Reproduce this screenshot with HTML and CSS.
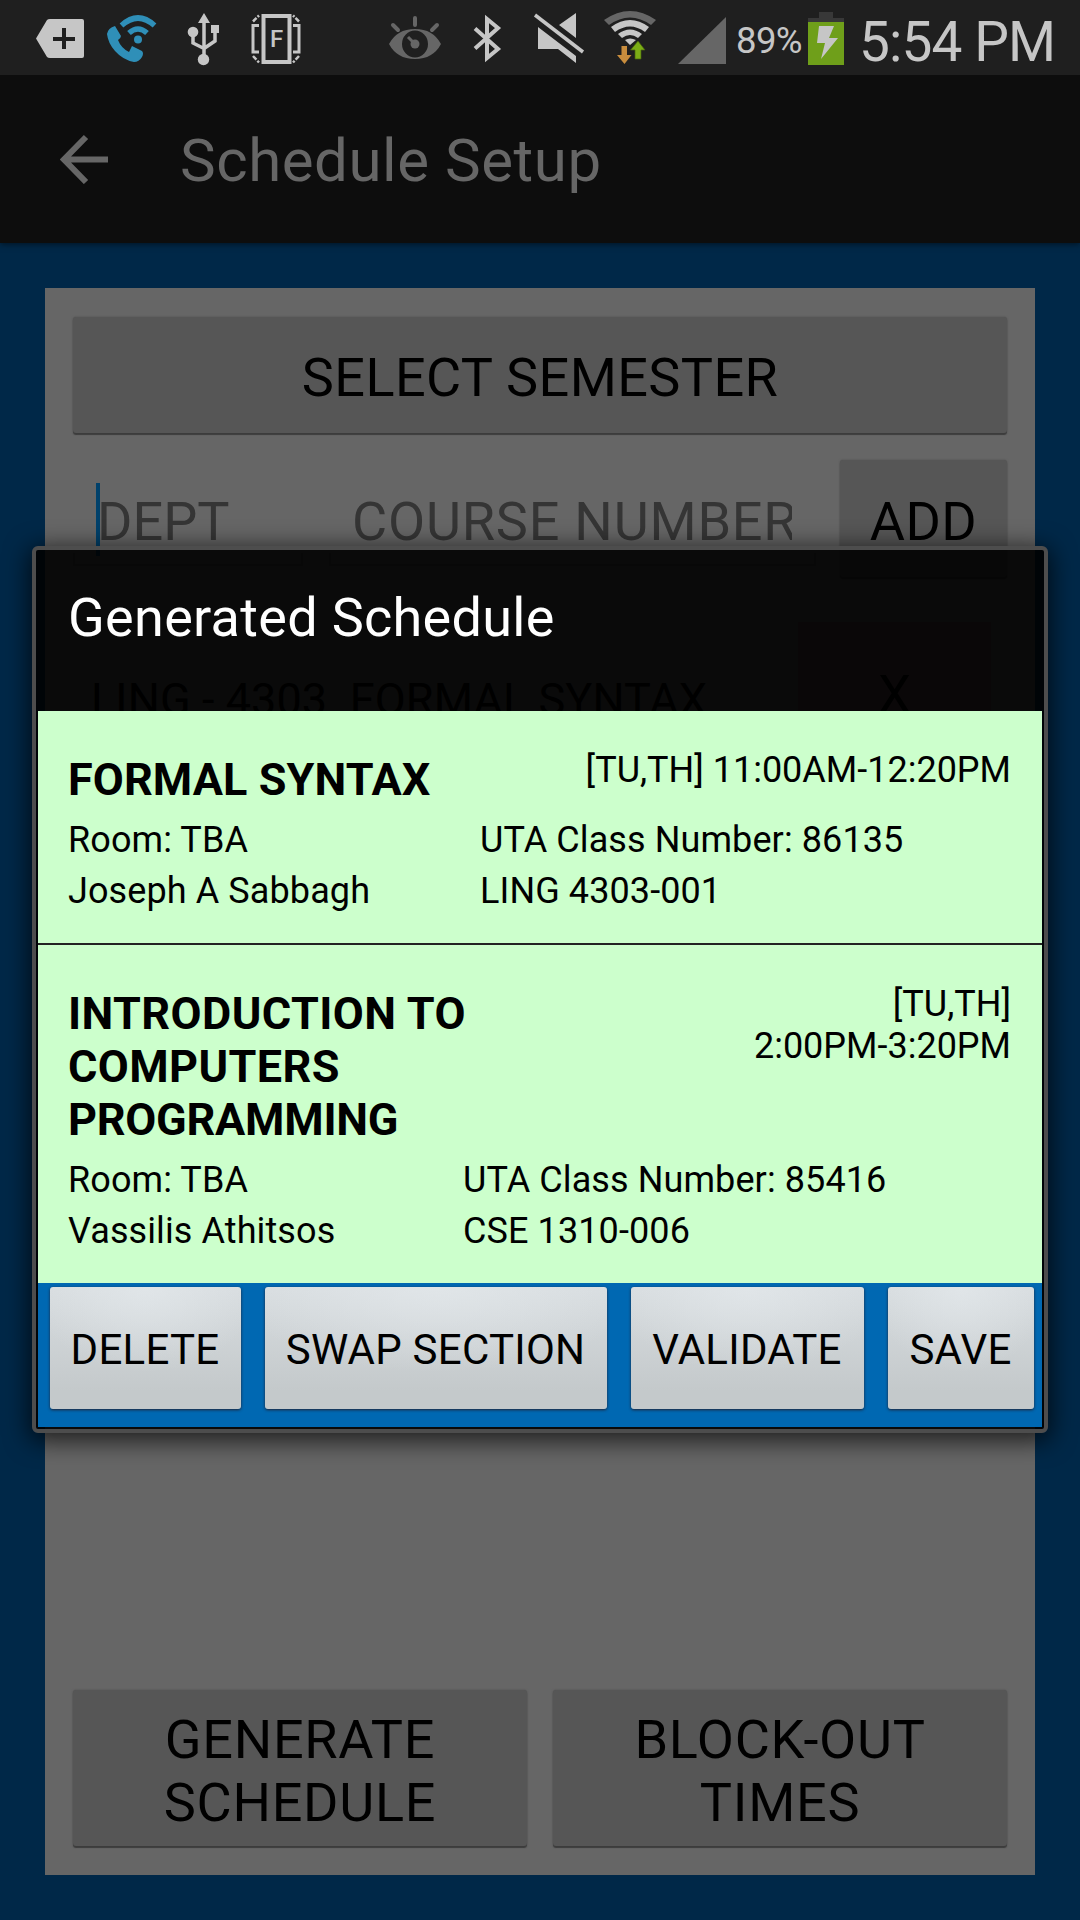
FILE: index.html
```html
<!DOCTYPE html>
<html lang="en">
<head>
<meta charset="utf-8">
<title>Schedule Setup</title>
<link rel="stylesheet" href="styles.css">
</head>
<body>
<div class="screen">
  <header class="status">
    <svg class="status-icons" width="780" height="75" viewBox="0 0 780 75">
      <path fill="#c6c6c6" fill-rule="evenodd" d="M36 38.500L47 20Q48 19 50 19H82Q84 19 84 21V56Q84 58 82 58H50Q48 58 47 57ZM62 28V37H53V41H62V49H66V41H75V37H66V28Z"/>
      <g fill="none" stroke="#2f8fb8" stroke-width="5.500">
        <path d="M121.500 25.500Q138 10.500 154.500 25.500"/>
        <path d="M129 33Q138 25 147 33"/>
      </g>
      <circle cx="138" cy="39.500" r="4" fill="#2f8fb8"/>
      <path fill="#2f8fb8" d="M107 34Q108 28 115 26L121 36Q121 38 118 40Q121 48 129 52L132 46L142 51Q144 53 142 57Q139 62 134 62Q123 60 115 51Q108 43 107 34Z"/>
      <g fill="none" stroke="#c6c6c6" stroke-width="3.500">
        <path d="M204 20V58M193 33V43L204 48.500M215 30V41L204 48.500"/>
      </g>
      <path fill="#c6c6c6" d="M204 13L210 23H198ZM211 25H219V33H211Z"/>
      <circle cx="193" cy="32" r="5.300" fill="#c6c6c6"/><circle cx="203.500" cy="59.500" r="5.700" fill="#c6c6c6"/>
      <g fill="none" stroke="#c6c6c6">
        <rect x="263.500" y="16" width="26" height="46" stroke-width="4"/>
        <path stroke-width="3" d="M259 25.500H253V52H259M293 25.500H299V52H293"/>
        <path stroke-width="2.500" stroke-dasharray="5 1.500" d="M253 21.500L259 15.500M299 21.500L293 15.500M253 56L259 62.500M299 56L293 62.500"/>
      </g>
      <g fill="none" stroke="#666" stroke-width="4" stroke-linecap="round">
        <path d="M415 18V25M393 25L398 30M437 25L432 30"/>
      </g>
      <path fill="#666" fill-rule="evenodd" d="M389 44Q397 29 415 29Q433 29 441 44Q433 59 415 59Q397 59 389 44ZM402 44A13 13.500 0 0 0 428 44A13 13.500 0 0 0 402 44Z"/>
      <circle cx="415" cy="44" r="4.500" fill="#666"/>
      <path d="M408 37L413 42" stroke="#666" stroke-width="3"/>
      <path fill="none" stroke="#c6c6c6" stroke-width="4" d="M475 28.500L498 49L487 58V19L498 28L475 48.500"/>
      <g fill="#c6c6c6">
        <path d="M576 13V38L559 25ZM538 27L576 56V63L558 49H538Z"/>
      </g>
      <path d="M535 15L583 52" stroke="#c6c6c6" stroke-width="3.500"/>
      <path fill="#666" d="M604 20Q630 2 656 20L651 25Q630 10 609 25Z"/>
      <path fill="#c6c6c6" d="M611 27Q630 13 649 27L645 32Q630 21 615 32ZM618 34Q630 25 642 34L638 38Q630 32 622 38ZM625 40Q630 37 636 40L630 45Z"/>
      <path fill="#c98d3d" d="M621.500 46H627V55H631.500L624.500 64L617 55H621.500Z"/>
      <path fill="#7cae16" stroke="#45610c" stroke-width=".7" d="M638 41L645 50H641V59H635V50H630.500Z"/>
      <path fill="#666" d="M678 64L726 17V64Z"/>
    </svg>
    <span class="f-mark">F</span>
    <span class="percent">89%</span>
    <svg class="battery" width="36" height="54" viewBox="0 0 36 54">
      <path fill="#383838" d="M11 0H25V6H36V11H0V6H11Z"/>
      <path fill="#6f9f1a" d="M0 10H36V53H0Z"/>
      <path fill="#c6c6c6" d="M11 14H26L21 26H30L13 47L17 31H9Z"/>
    </svg>
    <span class="clock">5:54 PM</span>
  </header>
  <nav class="appbar">
    <svg width="50" height="50" viewBox="0 0 50 50"><path fill="none" stroke="#666" stroke-width="6" d="M26 3L4 25.500L26 48M4 25.500H48"/></svg>
    <span>Schedule Setup</span>
  </nav>
  <main class="card">
    <div class="btn select">SELECT SEMESTER</div>
    <div class="entry">
      <div class="field dept">DEPT</div>
      <div class="field number"><span>COURSE NUMBER</span></div>
      <div class="btn add">ADD</div>
    </div>
    <div class="course"><span>LING - 4303&nbsp; FORMAL SYNTAX</span><div class="remove">X</div></div>
    <div class="actions">
      <div class="btn">GENERATE<br>SCHEDULE</div>
      <div class="btn">BLOCK-OUT<br>TIMES</div>
    </div>
  </main>
  <section class="dialog">
    <h1>Generated Schedule</h1>
    <article class="item first">
      <div class="top"><h2>FORMAL SYNTAX</h2><p>[TU,TH] 11:00AM-12:20PM</p></div>
      <div class="info"><p>Room: TBA</p><p>UTA Class Number: 86135</p><p>Joseph A Sabbagh</p><p>LING 4303-001</p></div>
    </article>
    <article class="item second">
      <div class="top"><h2><span class="wide">INTRODUCTION TO<br>COMPUTERS</span><br><span class="tight">PROGRAMMING</span></h2><p>[TU,TH]<br>2:00PM-3:20PM</p></div>
      <div class="info"><p>Room: TBA</p><p>UTA Class Number: 85416</p><p>Vassilis Athitsos</p><p>CSE 1310-006</p></div>
    </article>
    <footer class="buttons">
      <div class="key delete">DELETE</div><div class="key swap">SWAP SECTION</div><div class="key validate">VALIDATE</div><div class="key save">SAVE</div>
    </footer>
  </section>
</div>
</body>
</html>
```
FILE: styles.css
```css
* { box-sizing: border-box; }
body { margin: 0; font-family: Roboto, "Liberation Sans", sans-serif; color: #000; }
h1, h2, p { margin: 0; font-weight: 400; }
.screen { position: relative; width: 1080px; height: 1920px; overflow: hidden; background: #002848; display: flex; flex-direction: column; white-space: nowrap; }

.status { position: relative; height: 75px; flex: none; background: #1f1f1f; color: #c6c6c6; display: flex; align-items: flex-start; }
.status-icons { position: absolute; left: 0; top: 0; }
.f-mark { position: absolute; left: 270px; top: 25px; font-size: 24px; line-height: 28px; font-weight: 500; }
.percent { margin-left: 736px; width: 72px; font-size: 36.500px; line-height: 42px; margin-top: 20px; letter-spacing: -.6px; }
.battery { flex: none; margin-top: 12px; }
.clock { margin-left: 15px; margin-top: 10px; font-size: 55px; line-height: 64px; letter-spacing: -.9px; }

.appbar { height: 168px; flex: none; background: #0d0d0d; color: #666; display: flex; align-items: center; padding: 0 0 0 60px; font-size: 60px; letter-spacing: .55px; box-shadow: 0 1px 6px #001220; }
.appbar svg { margin-right: 70px; }
.appbar span { padding-top: 2px; }

.card { margin: 45px 45px 0; height: 1587px; background: #666; padding: 29px 28px 29px; display: flex; flex-direction: column; font-size: 54px; line-height: 63px; letter-spacing: .4px; }
.btn { background: #565656; border-radius: 3px; box-shadow: 0 2px 1px #3c3c3c, 0 0 2px #4d4d4d; display: flex; align-items: center; justify-content: center; text-align: center; padding-top: 5px; }
.select { height: 116px; }
.entry { display: flex; height: 117px; margin-top: 27px; }
.field { position: relative; color: #353535; border-bottom: 2px solid #505050; height: 106px; padding-top: 30px; }
/* Short upturned ends of the text field underline */
.field::after { content: ""; position: absolute; left: 0; right: 0; bottom: 0; height: 11px; border: solid #505050; border-width: 0 2px; }
.dept { width: 230px; padding-left: 24px; letter-spacing: 0; }
.dept::before { content: ""; position: absolute; left: 23px; top: 23px; width: 4px; height: 73px; background: #00416b; }
.number { width: 487px; margin-left: 26px; padding-left: 23px; letter-spacing: .8px; }
.number span { display: block; width: 440px; overflow: hidden; }
.add { width: 167px; margin-left: auto; }
.course { display: flex; height: 154px; margin-top: 45px; padding-left: 18px; font-size: 45px; letter-spacing: .1px; align-items: center; }
.remove { background: #664650; width: 193px; height: 154px; margin-left: auto; margin-right: 16px; text-align: center; font-size: 52px; line-height: 146px; }
.actions { margin-top: auto; display: flex; gap: 26px; height: 156px; letter-spacing: .7px; }
.actions .btn { flex: 1; }

.dialog { position: absolute; left: 32px; top: 546px; width: 1016px; height: 887px; border: 4px solid #4d4d4d; border-radius: 6px; background: rgba(0,0,0,.9); box-shadow: 0 5px 24px 3px rgba(0,0,0,.7); }
.dialog h1 { height: 161px; padding: 36px 32px 0; color: #fff; font-size: 54px; line-height: 63px; letter-spacing: .3px; }
.item { margin: 0 2px; background: #cfc; padding: 0 31px 0 30px; }
.first { height: 234px; border-bottom: 2px solid #222; padding-top: 42px; }
.second { height: 338px; padding-top: 42px; }
.top { display: flex; justify-content: space-between; font-size: 36px; line-height: 42px; text-align: right; }
.top h2 { font-size: 45px; line-height: 53px; font-weight: 700; text-align: left; letter-spacing: .1px; }
.wide { letter-spacing: .4px; }
.tight { letter-spacing: -.25px; }
.top p { margin-top: -4px; }
.info { display: grid; grid-template-columns: 412px 1fr; font-size: 36px; line-height: 42px; row-gap: 9px; margin-top: 13px; letter-spacing: .1px; }
.second .info { grid-template-columns: 395px 1fr; }
.buttons { margin: 0 2px; height: 144px; background: #0068b2; display: flex; padding: 4px 8px 0 12px; }
.key { height: 122px; font-size: 42px; letter-spacing: .25px; display: flex; align-items: center; justify-content: center; border-radius: 3px; padding: 2px 1px 0 0; background: radial-gradient(ellipse 60% 70% at 50% 0, rgba(228,233,236,.7), rgba(228,233,236,0)), linear-gradient(#d8dde0, #c4c9cb 85%); box-shadow: 0 1px 3px #223; }
.delete { width: 191px; }
.swap { width: 342px; margin-left: 24px; }
.validate { width: 233px; margin-left: 24px; }
.save { width: 146px; margin-left: auto; }
```
